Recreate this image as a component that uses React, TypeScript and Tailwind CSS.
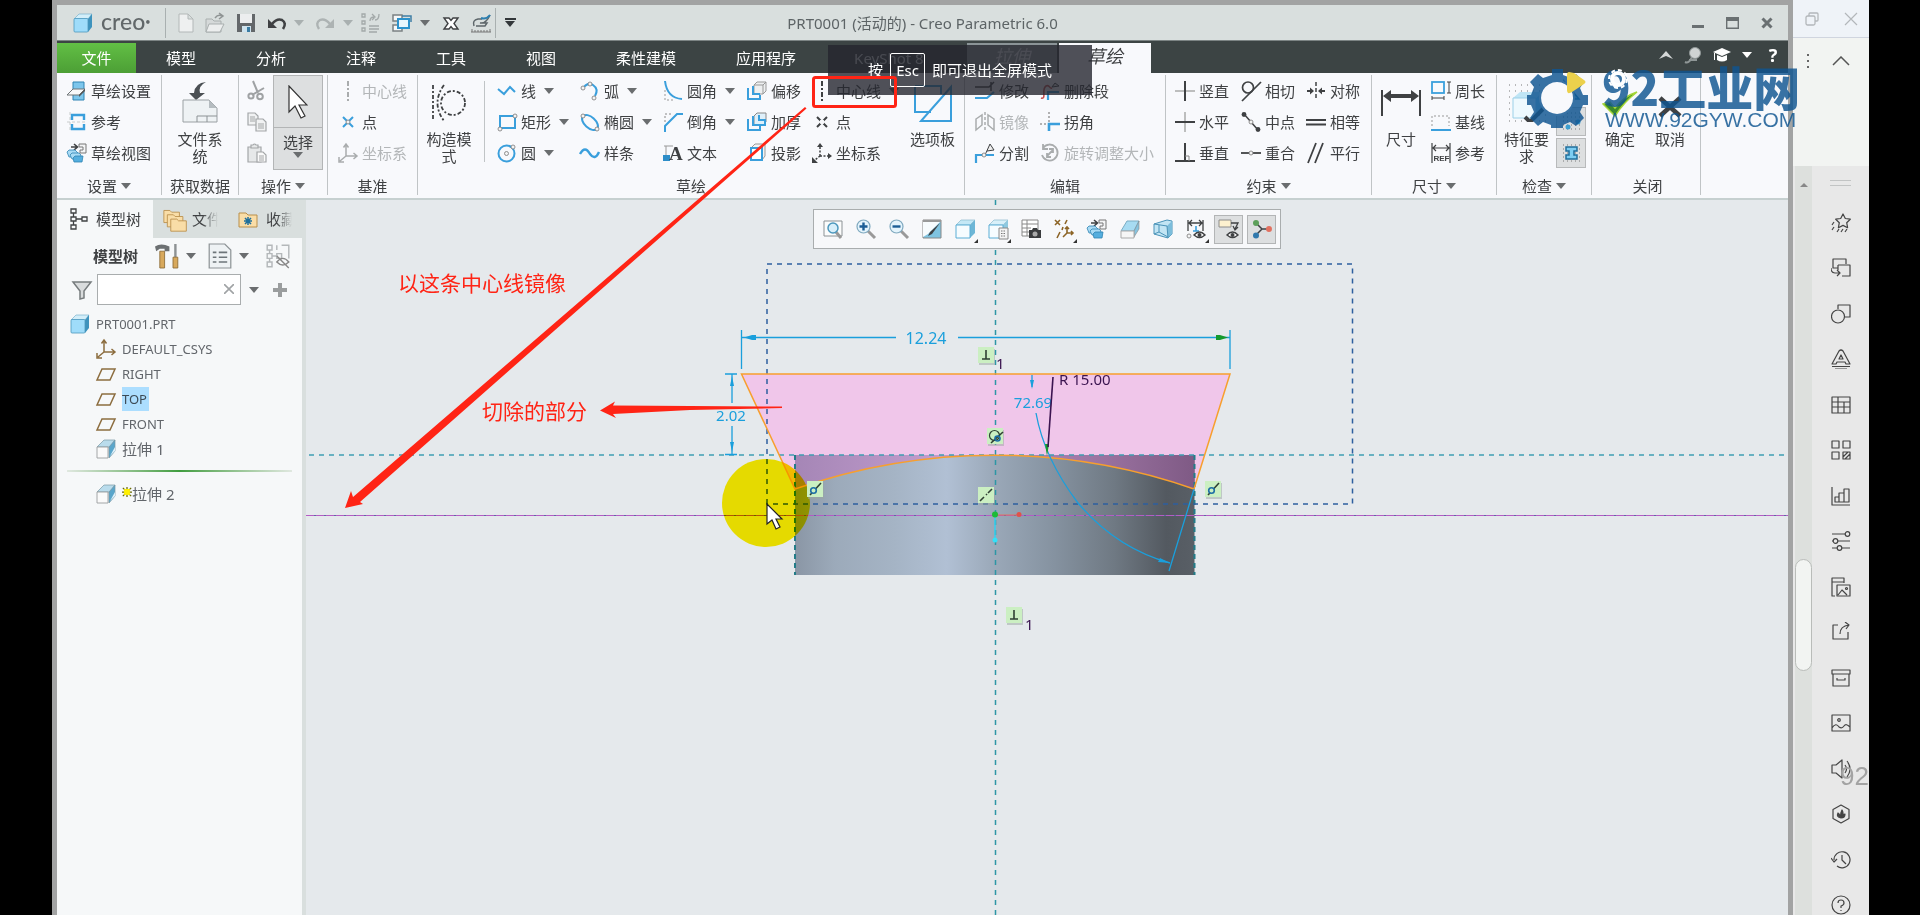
import type { ReactNode } from 'react';

interface Tool {
  icon: string;
  label: string;
  off?: boolean;
  drop?: boolean;
}

const BLUE = '#3a9fdc';
const DARK = '#3f4143';
const GRAY = '#a9acad';

const cube = (
  <>
    <path d="M1 6 6 1h13l-4 5z" fill="#d3eef9" stroke="#6aa9c8" strokeWidth=".6" />
    <path d="M15 6l4-5v13l-4 5z" fill="#3e93bd" />
    <rect x="1" y="5.500" width="14" height="13.500" rx="1" fill="#9fdcfa" stroke="#4b97bd" strokeWidth=".8" />
  </>
);

const plates = (
  <>
    <path d="M4 4h6M7 1l3.500 3L7 7" stroke={DARK} strokeWidth="1.600" fill="none" />
    <path d="M12 1h7v9h-6V7h3V4h-4z" fill="#f4f5f6" stroke="#777" strokeWidth="1" />
    <path d="M0 9l2-2h6l3 3-1 4H2z" fill="#a9dbf5" stroke="#2f84b3" strokeWidth=".8" />
    <path d="M3 12l2-2h7l2 2-1 4H5z" fill="#a9dbf5" stroke="#2f84b3" strokeWidth=".8" />
    <path d="M6 15l2-2h8l-1 6H7z" fill="#55aede" stroke="#2f84b3" strokeWidth=".8" />
  </>
);

const knob = (x: number, y: number) => <circle cx={x} cy={y} r="2" fill="#f3f3f3" stroke="#777" strokeWidth=".8" />;

const axes = (color: string) => (
  <path
    d="M8 13V2M5.500 4.500 8 1l2.500 3.500M8 13h10M15.500 10l3.500 3-3.500 3M8 13l-6 5M1 14v5h5"
    stroke={color}
    strokeWidth="1.500"
    fill="none"
  />
);

const extrude = (
  <>
    <path d="M1 8 8 1h11l-5 7z" fill="#b9dcec" stroke="#7a98a5" strokeWidth=".7" />
    <path d="M13 8l6-7v11l-6 7z" fill="#5aa6cb" stroke="#7a98a5" strokeWidth=".7" />
    <path d="M14 17l5-9v4z" fill="#dff1fa" />
    <path d="M1 8h11v11H1z" fill="#fafafa" stroke="#9a9d9e" strokeWidth=".9" />
  </>
);

const folder = (
  <path d="M1 4h7l2 2h9v12H1z" fill="#f9dda7" stroke="#b98f4a" strokeWidth="1" />
);

const eye = (
  <>
    <path d="M8 16q5.500-6 11 0-5.500 5-11 0z" fill="#fff" stroke={DARK} strokeWidth="1.400" />
    <circle cx="13.500" cy="16" r="2" fill={DARK} />
  </>
);

// all glyphs are drawn on a 20 x 20 grid
const glyphs: Record<string, ReactNode> = {
  cube,
  plates,
  extrude,
  sketchSetup: (
    <>
      <path d="M6 1h11v18H6z" fill="#7cc6ec" stroke="#2f84b3" />
      <path d="M0 14 6 8h12l-6 6z" fill="#f8f9fa" stroke="#6f7476" />
      <path d="M12 14l6-6v2l-6 6z" fill="#55585a" />
    </>
  ),
  reference: (
    <>
      <path d="M0 10h20M3 0v20" stroke="#c9cccc" strokeDasharray="3 2" />
      <path d="M5 8V3h12v5M5 12v5h12v-5" stroke={BLUE} strokeWidth="2.400" fill="none" />
    </>
  ),
  scissors: (
    <g fill="none" stroke="#9fa2a4" strokeWidth="2">
      <path d="M6 0l5 12M17 7 5 14" />
      <circle cx="4" cy="15" r="2.600" />
      <circle cx="13" cy="15.500" r="2.800" />
    </g>
  ),
  copy: (
    <g fill="#f1f2f3" stroke="#a3a6a8" strokeWidth="1.200">
      <path d="M1 1h7l3 3v9H1z" />
      <path d="M9 7h7l3 3v9H9z" />
      <path d="M3 5h5M3 7h5M3 9h5M11 12h6M11 14h6M11 16h6" />
    </g>
  ),
  paste: (
    <g fill="#e6e8e9" stroke="#a3a6a8" strokeWidth="1.200">
      <path d="M1 4h13v15H1z" />
      <path d="M4 2h2q1.500-2 3 0h2v3H4z" />
      <path d="M10 9h6l3 3v7h-9z" fill="#fafafa" />
      <path d="M12 13h5M12 15h5M12 17h5" />
    </g>
  ),
  centerOff: <path d="M10 0v20" stroke={GRAY} strokeWidth="2" strokeDasharray="5 2 2 2" />,
  centerline: <path d="M10 0v20" stroke={DARK} strokeWidth="2" strokeDasharray="5 2 2 2" />,
  pointBlue: (
    <>
      <path d="M5 5l10 10M15 5 5 15" stroke={BLUE} strokeWidth="2" />
      {knob(10, 10)}
    </>
  ),
  point: (
    <>
      <path d="M5 5l10 10M15 5 5 15" stroke={DARK} strokeWidth="2" />
      <circle cx="10" cy="10" r="2.400" fill="#f8f9fc" />
    </>
  ),
  csysOff: axes(GRAY),
  csysBrown: axes('#8c6d3f'),
  csys: (
    <>
      <path d="M8 13V3M8 13h8M8 13l-5 4" stroke={DARK} strokeWidth="1.500" fill="none" strokeDasharray="2 1.500" />
      <path d="M5 4l3-4 3 4zM16 10l4 3-4 3zM0 14v6h6z" fill={DARK} />
    </>
  ),
  line: <path d="M1 8l6 5 6-7 5 5" stroke={BLUE} strokeWidth="2" fill="none" />,
  rect: (
    <>
      <rect x="3" y="4" width="15" height="12" fill="none" stroke={BLUE} strokeWidth="2" />
      {knob(3, 17)}
      {knob(18, 4)}
    </>
  ),
  circle: (
    <>
      <circle cx="9.500" cy="10.500" r="8" fill="none" stroke={BLUE} strokeWidth="2" />
      {knob(9.5, 10.5)}
      {knob(16, 4)}
    </>
  ),
  arc: (
    <>
      <path d="M4 6q4-5 9-2 6 4 2 11" fill="none" stroke={BLUE} strokeWidth="2" />
      {knob(3, 7)}
      {knob(10, 3)}
      {knob(14, 17)}
    </>
  ),
  ellipse: (
    <>
      <ellipse cx="10" cy="10.500" rx="9.500" ry="5.500" transform="rotate(42 10 10.500)" fill="none" stroke={BLUE} strokeWidth="2" />
      {knob(3, 4)}
      {knob(17, 17)}
    </>
  ),
  spline: <path d="M0 11q5-9 10 0 5 7 9-2" fill="none" stroke={BLUE} strokeWidth="2.400" />,
  fillet: (
    <>
      <path d="M2 9v10h9" fill="none" stroke="#999" strokeDasharray="2 2" />
      <path d="M2 0q2 17 17 18" fill="none" stroke={BLUE} strokeWidth="2" />
    </>
  ),
  chamfer: (
    <>
      <path d="M2 10V2h8" fill="none" stroke="#888" strokeDasharray="2 2" />
      <path d="M2 20v-6L14 2h6" fill="none" stroke={BLUE} strokeWidth="2" />
    </>
  ),
  text: (
    <>
      <path d="M1 3h9M3 3v9" stroke="#999" />
      <rect x="0" y="12" width="7" height="6" fill="#2d8dc8" />
      <text x="6" y="17" fontFamily="Liberation Serif" fontWeight="700" fontSize="19" fill={DARK}>A</text>
    </>
  ),
  offset: (
    <>
      <path d="M7 4 10 1h9v9l-3 3H7zM7 4h9v9M16 4l3-3" fill="#eef0f1" stroke="#999" />
      <path d="M1 7v11h12v-4M6 5v8h7" fill="none" stroke={BLUE} strokeWidth="2" />
    </>
  ),
  thicken: (
    <>
      <path d="M7 4 10 1h9v9l-3 3H7z" fill="#dff0fa" stroke="#888" />
      <path d="M1 7v11h12v-4M6 4v9h12V8h-6V3" fill="none" stroke={BLUE} strokeWidth="2" />
    </>
  ),
  project: (
    <>
      <path d="M4 5l4-4h10v12l-3 4" fill="#f2f3f4" stroke="#999" />
      <path d="M4 5h11v12H4z" fill="#fff" stroke={BLUE} strokeWidth="2" />
    </>
  ),
  modify: (
    <>
      <path d="M0 6h14l5-5M16 1v9" stroke={DARK} strokeWidth="1.500" fill="none" />
      <path d="M0 17h12l7-6" stroke={BLUE} strokeWidth="2.200" fill="none" />
    </>
  ),
  deleteSeg: (
    <>
      <path d="M1 17c6 2 0-9 5-12 4-2 3 3 6 2" stroke="#c45252" strokeWidth="1.600" fill="none" />
      <path d="M8 19v-8h11" stroke={BLUE} strokeWidth="2.200" fill="none" />
      <path d="M12 6l3-4 4 3z" fill="#ddd" stroke={DARK} />
    </>
  ),
  mirror: (
    <g fill="none" stroke={GRAY} strokeWidth="1.500">
      <path d="M10 0v20" strokeDasharray="3 2" />
      <path d="M1 7l6-4v10l-6 5zM19 7l-6-4v10l6 5z" />
    </g>
  ),
  corner: (
    <>
      <path d="M0 12h8M9 0v10" stroke="#999" strokeWidth="1.500" strokeDasharray="2 2" />
      <path d="M9 19v-7h11" stroke={BLUE} strokeWidth="2.600" fill="none" />
    </>
  ),
  divide: (
    <>
      <path d="M1 20v-8h18" stroke={BLUE} strokeWidth="2.200" fill="none" />
      <path d="M10 12 15 1l4 6-7 1" fill="#eee" stroke={DARK} />
      {knob(9, 12)}
    </>
  ),
  rotateSize: (
    <g fill="none" stroke={GRAY} strokeWidth="1.800">
      <path d="M3 5a8 8 0 1 1-1 7M3 1v5h5M7 13l6-6M9 6h4v4M7 10v4h4" />
    </g>
  ),
  vertical: (
    <>
      <path d="M0 10h20" stroke="#aaa" strokeWidth="1.500" />
      <path d="M10 0v20" stroke={DARK} strokeWidth="2" />
    </>
  ),
  horizontal: (
    <>
      <path d="M10 0v20" stroke="#aaa" strokeWidth="1.500" />
      <path d="M0 10h20" stroke={DARK} strokeWidth="2" />
    </>
  ),
  perp: (
    <>
      <path d="M10 0v18M0 18h20" stroke={DARK} strokeWidth="2" />
      <path d="M10 13h4v5" stroke="#888" fill="none" />
    </>
  ),
  tangent: (
    <g fill="none" stroke={DARK} strokeWidth="1.700">
      <circle cx="7" cy="6.500" r="5.500" />
      <path d="M1 20 20 1" />
    </g>
  ),
  midpoint: (
    <>
      <path d="M3 2l14 16" stroke={DARK} strokeWidth="1.500" />
      <circle cx="3" cy="2.500" r="2.400" fill={DARK} />
      <circle cx="17" cy="17.500" r="2.400" fill={DARK} />
      {knob(10, 10)}
    </>
  ),
  coincident: (
    <>
      <path d="M0 10h20" stroke={DARK} strokeWidth="1.800" />
      {knob(10, 10)}
    </>
  ),
  symmetric: (
    <>
      <path d="M10 1v18" stroke={DARK} strokeWidth="1.500" strokeDasharray="4 2" />
      <path d="M1 10h6M19 10h-6" stroke={DARK} strokeWidth="2" />
      <path d="M4 6.500 8 10l-4 3.500zM16 6.500 12 10l4 3.500z" fill={DARK} />
    </>
  ),
  equal: <path d="M0 8h20M0 12.500h20" stroke={DARK} strokeWidth="1.800" />,
  parallel: <path d="M2 20 10 0M9 20 17 0" stroke={DARK} strokeWidth="1.800" />,
  perimeter: (
    <>
      <rect x="1" y="1" width="12" height="11" fill="none" stroke={BLUE} strokeWidth="1.800" />
      <path d="M18 1v11M16 1h4M16 12h4M1 17h12M1 15v4M13 15v4" stroke={DARK} />
    </>
  ),
  baseline: (
    <>
      <path d="M1 14V4h17v10" fill="none" stroke="#999" strokeDasharray="2 2" />
      <path d="M0 18h20" stroke={BLUE} strokeWidth="2" />
    </>
  ),
  refDim: (
    <>
      <path d="M1 0v20M19 0v20M2 5h16M5 2 2 5l3 3M15 2l3 3-3 3" stroke={DARK} strokeWidth="1.200" fill="none" />
      <text x="2.500" y="18" fontFamily="Liberation Sans" fontWeight="700" fontSize="8" fill={DARK}>REF</text>
    </>
  ),
  grid: (
    <>
      <path d="M2 2h17M2 6h17M2 10h17M2 14h17M2 18h17" stroke="#777" strokeDasharray="1 3" />
      <path d="M5 4h11v4h-3v4h3v4H5v-4h3V8H5z" fill="#7ccdf2" stroke="#1f6f9c" strokeWidth="1.500" />
    </>
  ),
  endpoints: (
    <>
      <path d="M2 2h17M2 6h17M2 10h17M2 14h17M2 18h17" stroke="#777" strokeDasharray="1 3" />
      <circle cx="7" cy="16" r="2.500" fill="#3d9fd0" />
      <circle cx="17" cy="11" r="2.500" fill="#3d9fd0" />
    </>
  ),
  region: <path d="M3 1v18h15zM7 9v6h6z" fill="#8ed0ef" stroke="#2a7fb0" strokeWidth="1.500" />,
  newDoc: <path d="M3 1h9l5 5v13H3zM12 1v5h5" fill="#eef0f0" stroke="#b3b8b8" />,
  open: (
    <>
      <path d="M1 6h6l2 2h7v11H1z" fill="#d5d9d9" stroke="#a9afaf" />
      <path d="M4 11h15l-4 8H1z" fill="#eceeee" stroke="#a9afaf" />
      <path d="M10 5q3-4 7-2M14 0l4 3-4 3" fill="none" stroke="#8f9494" strokeWidth="1.500" />
    </>
  ),
  save: (
    <>
      <path d="M1 1h18v18H1z" fill="#63676a" />
      <path d="M4 1h12v9H4z" fill="#eceeef" />
      <path d="M6 13h9v6H6z" fill="#cfe3ee" />
      <path d="M11 14h3v5h-3z" fill="#3a7ca3" />
    </>
  ),
  undo: (
    <>
      <path d="M5 11q5-6 10-4 5 3 1 9" fill="none" stroke={DARK} strokeWidth="2.600" />
      <path d="M1 6v9h9z" fill={DARK} />
    </>
  ),
  redo: (
    <>
      <path d="M15 11q-5-6-10-4-5 3-1 9" fill="none" stroke="#adb3b3" strokeWidth="2.400" />
      <path d="M19 6v9h-9z" fill="#adb3b3" />
    </>
  ),
  regen: (
    <g fill="none" stroke="#a3a9a9" strokeWidth="1.300">
      <path d="M1 1h3v3H1zM1 8h3v3H1zM1 15h3v3H1zM8 13h10M8 16h10M8 19h8M9 8q0-4 4-4M11 1l3 3-3 3M18 1q0 6-4 6" />
    </g>
  ),
  windows: (
    <g fill="#f5f7f8" strokeWidth="1.500">
      <path d="M1 2h9v6H1z" stroke="#7b8183" />
      <path d="M1 12h9v6H1z" stroke="#7b8183" />
      <path d="M6 6h11v9H6z" fill="#e8f6fd" stroke="#2c92cc" strokeWidth="2" />
      <path d="M10 3h9v6" fill="none" stroke="#3f7fa5" />
    </g>
  ),
  closeBox: (
    <path d="M3 5h5l2 2.500L12 5h5l-4 5.500 4 5.500h-5l-2-2.500L8 16H3l4-5.500z" fill="#fff" stroke={DARK} strokeWidth="1.400" />
  ),
  sketchPad: (
    <>
      <path d="M1 19v-3M4 17v2M7 17v2M10 17v2M13 17v2M16 17v2M19 16v3M0 19h20" stroke="#777" fill="none" />
      <path d="M3 13q-2-6 4-7h4M5 13h9l2-3H9q6 1 10-8" fill="none" stroke="#5d666a" strokeWidth="1.500" />
      <path d="M10 5q5 2 9-3" fill="none" stroke="#2c7fb0" strokeWidth="2" />
    </>
  ),
  treeTab: (
    <path d="M3 0h5v4H3zM3 8h5v4H3zM3 16h5v4H3zM14 8h5v4h-5zM5.500 4v4M5.500 12v4M8 10h6" fill="none" stroke={DARK} strokeWidth="1.300" />
  ),
  folders: (
    <g transform="scale(.72)">
      {folder}
      <g transform="translate(4 5)">{folder}</g>
      <g transform="translate(8 10)">{folder}</g>
    </g>
  ),
  favorite: (
    <>
      {folder}
      <path d="M10 8v8M6 12h8M7 9l6 6M13 9l-6 6" stroke="#1f6f9c" strokeWidth="1.500" />
    </>
  ),
  hammer: (
    <>
      <path d="M0 2q5-3 12 0v4H8V4H4L1 6z" fill="#6c7072" />
      <path d="M4 6h4v14H4z" fill="#d8a95c" stroke="#8a6a34" strokeWidth=".7" />
      <path d="M16 0h2v11h-2z" fill="#8d9193" />
      <path d="M15 11h4v9h-4z" fill="#d8a95c" stroke="#8a6a34" strokeWidth=".7" />
    </>
  ),
  listDoc: (
    <>
      <path d="M1 0h13l5 5v15H1z" fill="#eef2f4" stroke="#8c9295" />
      <path d="M9 7h7M9 11h7M9 15h7M4 7h3M4 11h3M4 15h3" stroke="#6d7579" strokeWidth="1.300" />
    </>
  ),
  treeHide: (
    <g fill="none" stroke="#b4b8ba" strokeWidth="1.200">
      <path d="M1 1h4v4H1zM1 8h4v4H1zM1 15h4v4H1zM9 8h4v4H9zM3 5v3M3 12v3M5 10h4M9 1v4M13 1h6v11" />
      <path d="M9 15q5-6 10 0-5 5-10 0zM9 10l10 10" stroke="#888" />
    </g>
  ),
  funnel: <path d="M1 2h18l-7 9v7l-4 1v-8z" fill="#d9dcdd" stroke="#777c7e" strokeWidth="1.500" />,
  plane: <path d="M6 5h13l-5 11H1z" fill="none" stroke="#8c6d3f" strokeWidth="1.500" />,
  refit: (
    <>
      <path d="M1 2h18v15H1z" fill="#fbfcfc" stroke="#8c9295" />
      <path d="M13 13l5 6" stroke="#999" strokeWidth="3" />
      <circle cx="10" cy="9" r="5" fill="#d8effa" stroke="#4b97bd" strokeWidth="1.500" />
    </>
  ),
  zoomIn: (
    <>
      <path d="M12 12l7 7" stroke="#999" strokeWidth="3" />
      <circle cx="7.500" cy="7.500" r="6.500" fill="#e4f4fc" stroke="#7fa9bf" strokeWidth="1.200" />
      <path d="M3.500 7.500h8M7.500 3.500v8" stroke="#1c5e96" strokeWidth="2.400" />
    </>
  ),
  zoomOut: (
    <>
      <path d="M12 12l7 7" stroke="#999" strokeWidth="3" />
      <circle cx="7.500" cy="7.500" r="6.500" fill="#e4f4fc" stroke="#7fa9bf" strokeWidth="1.200" />
      <path d="M3.500 7.500h8" stroke="#1c5e96" strokeWidth="2.400" />
    </>
  ),
  repaint: (
    <>
      <path d="M1 1h18v18H1z" fill="#7fc3e0" stroke="#888" />
      <path d="M1 3h17L6 15l-5 3z" fill="#f7fbfd" />
      <path d="M1 1h18v2H1z" fill="#999" />
      <path d="M6 17l2-4L18 4l-8 11z" fill={DARK} />
    </>
  ),
  display: (
    <>
      <path d="M1 6 6 1h14l-5 5z" fill="#c4e8f6" stroke="#8bb9cc" strokeWidth=".7" />
      <path d="M15 6l5-5v13l-5 5z" fill="#6db6d6" />
      <path d="M1 6h14v13H1z" fill="#f6fcff" stroke="#5aaed6" strokeWidth="1" />
    </>
  ),
  saved: (
    <>
      <path d="M1 6 6 1h14l-5 5z" fill="#d8f0f9" stroke="#8bb9cc" strokeWidth=".7" />
      <path d="M15 6l5-5v11l-5 3z" fill="#8fc9e0" />
      <path d="M1 6h14v13H1z" fill="#f6fcff" stroke="#5aaed6" strokeWidth="1" />
      <path d="M11 9h9v11h-9z" fill="#f4f4f4" stroke="#888" />
      <path d="M13 12h5M13 14.500h5M13 17h5" stroke="#777" strokeDasharray="1.500 1" />
    </>
  ),
  snapshot: (
    <>
      <path d="M1 1h16v16H1zM1 5h16M1 9h9M1 13h8M6 1v16" fill="#fff" stroke="#888" />
      <path d="M8 11h3l1-2h4l1 2h3v8H8z" fill="#3a3c3e" />
      <circle cx="14" cy="15" r="2.500" fill="#aaa" />
    </>
  ),
  datum: (
    <g stroke="#8c6426" strokeWidth="1.600" fill="none">
      <path d="M1 1l5 5M6 1 1 6M13 1l-2 4M9 8l-1 3M6 13l-3 6" />
      <path d="M13 8v6h6M13 14l-4 4M11 10l2-2 2 2M17 12l2 2-2 2" />
    </g>
  ),
  section: (
    <>
      <path d="M1 12 7 2h12l-5 10z" fill="#a7dbf2" stroke="#7badc4" />
      <path d="M14 12l5-10v8l-5 8z" fill="#86c4e0" stroke="#888" strokeWidth=".6" />
      <path d="M1 12h13v7H1z" fill="#f6f6f6" stroke="#aaa" />
    </>
  ),
  perspective: (
    <>
      <path d="M1 5 14 1l5 1v13l-4 4L1 15z" fill="#c2e5f4" stroke="#4a93b8" strokeWidth="1" />
      <path d="M14 7l5-5v13l-4 4z" fill="#7cbddb" />
      <path d="M1 5l13 2 1 12M6 6v7l9 5M6 13l-5 2" fill="none" stroke="#4a93b8" />
    </>
  ),
  dimView: (
    <>
      <path d="M2 1v11M17 1v11M3 4h13M6 1 3 4l3 3M13 1l3 3-3 3" stroke={DARK} strokeWidth="1.300" fill="none" />
      <path d="M10 7v5M7 12h6" stroke={BLUE} strokeWidth="1.600" />
      {knob(3, 17)}
      {eye}
    </>
  ),
  tagView: (
    <>
      <path d="M0 1h12v7H0z" fill="#fdf1cf" stroke="#8c8c8c" />
      <path d="M12 4h7l-3 6M14 7l2 4 3-3" fill="none" stroke={DARK} strokeWidth="1.300" />
      {eye}
    </>
  ),
  spin: (
    <>
      <path d="M4 4l6 6h7M10 10l-6 6" stroke={DARK} strokeWidth="1.500" fill="none" />
      <circle cx="4" cy="4" r="3" fill="#5da05a" />
      <circle cx="17" cy="10" r="3" fill="#e2705f" />
      <circle cx="4" cy="16.500" r="3" fill="#3179ad" />
    </>
  ),
};

// icons of the outer application rail, outline only
const rail: [string, ReactNode][] = [
  ['特效', <path d="M12 1l2.300 4.500 5 .7-3.600 3.500.9 5L12 12.400 7.400 14.700l.9-5L4.700 6.200l5-.7zM3 9l-2 3M3 14l-2 3M8 16l-2 3M12 16l-2 3M16 16l-2 3" />],
  ['替换', <path d="M7 10H2V1h13v5M7 7h12v11h-8M7 7v5M0 10q0 5 4 5h4M6 12l3 3-3 3" />],
  ['形状', <><circle cx="7" cy="12.500" r="6.500" /><path d="M7 5V1h12v12h-5" /></>],
  ['艺术字', <path d="M1 15 8 2q2-2 4 0l7 13h-4l-1-2H6l-1 2zM8 10l2-4 2 4zM1 17.500h18M4 20h12" />],
  ['表格', <path d="M1 2h18v16H1zM1 7h18M1 12h18M7 2v10M13 7v11M7 12v6" />],
  ['图标库', <path d="M1 1h7v7H1zM12 1h7v7h-7zM1 12h7v7H1zM12 12h7v7h-7zM12 17l5-5M14 19l5-5" />],
  ['图表', <path d="M1 1v18h18M4 16v-5h4v5zM8 16V7h5v9M13 16V3h5v13H8" />],
  ['设置', <><path d="M1 3h13M1 10h1M7 10h12M1 17h5M11 17h8" /><circle cx="16.500" cy="3" r="2.300" /><circle cx="4.500" cy="10" r="2.300" /><circle cx="8.500" cy="17" r="2.300" /></>],
  ['图片库', <><path d="M4 19H1V1h12v5M1 5h12M6 8h13v11H6zM7 18l4-5 5 5" /><circle cx="15.500" cy="11.500" r="1" /></>],
  ['分享', <path d="M7 3H2v14h15v-7M9 12q0-8 9-9M14 0l4 3-3 4" />],
  ['素材', <path d="M1 2h18v4H1zM2 6v12h16V6M6 10v2h8v-2" />],
  ['图片', <><path d="M1 2h18v16H1zM1 15q4-6 7-1 3 2 5-1 2-3 6 1" /><circle cx="8" cy="7" r="1.300" /></>],
  ['音频', <path d="M1 6h4l6-5v18l-6-5H1zM14 6q3 4 0 8M16 2q6 8 0 16" />],
  ['素材社区', <><path d="M10 1l8 4.500v9L10 19l-8-4.500v-9z" /><path d="M10 14q-5-1-3-5 2 1 3 4-1-4 1-7 2 3 0 7 1-3 3-3 0 4-4 4z" fill="#444" /></>],
  ['历史', <path d="M3 10a8 8 0 1 1 3 6M0 8l3 4 3-3M11 5v5l4 4" />],
  ['帮助', <><circle cx="10" cy="10" r="9" /><path d="M7 8q0-3 3-3t3 3q0 2-3 3v2M10 15v1" /></>],
];

const settings: Tool[] = [
  { icon: 'sketchSetup', label: '草绘设置' },
  { icon: 'reference', label: '参考' },
  { icon: 'plates', label: '草绘视图' },
];
const datums: Tool[] = [
  { icon: 'centerOff', label: '中心线', off: true },
  { icon: 'pointBlue', label: '点' },
  { icon: 'csysOff', label: '坐标系', off: true },
];
const shapes: Tool[] = [
  { icon: 'line', label: '线', drop: true },
  { icon: 'rect', label: '矩形', drop: true },
  { icon: 'circle', label: '圆', drop: true },
];
const curves: Tool[] = [
  { icon: 'arc', label: '弧', drop: true },
  { icon: 'ellipse', label: '椭圆', drop: true },
  { icon: 'spline', label: '样条' },
];
const corners: Tool[] = [
  { icon: 'fillet', label: '圆角', drop: true },
  { icon: 'chamfer', label: '倒角', drop: true },
  { icon: 'text', label: '文本' },
];
const offsets: Tool[] = [
  { icon: 'offset', label: '偏移' },
  { icon: 'thicken', label: '加厚' },
  { icon: 'project', label: '投影' },
];
const centers: Tool[] = [
  { icon: 'centerline', label: '中心线', drop: true },
  { icon: 'point', label: '点' },
  { icon: 'csys', label: '坐标系' },
];
const edits: Tool[] = [
  { icon: 'modify', label: '修改' },
  { icon: 'mirror', label: '镜像', off: true },
  { icon: 'divide', label: '分割' },
];
const edits2: Tool[] = [
  { icon: 'deleteSeg', label: '删除段' },
  { icon: 'corner', label: '拐角' },
  { icon: 'rotateSize', label: '旋转调整大小', off: true },
];
const constraints: Tool[][] = [
  [
    { icon: 'vertical', label: '竖直' },
    { icon: 'horizontal', label: '水平' },
    { icon: 'perp', label: '垂直' },
  ],
  [
    { icon: 'tangent', label: '相切' },
    { icon: 'midpoint', label: '中点' },
    { icon: 'coincident', label: '重合' },
  ],
  [
    { icon: 'symmetric', label: '对称' },
    { icon: 'equal', label: '相等' },
    { icon: 'parallel', label: '平行' },
  ],
];
const dimensions: Tool[] = [
  { icon: 'perimeter', label: '周长' },
  { icon: 'baseline', label: '基线' },
  { icon: 'refDim', label: '参考' },
];

const viewTools: { icon: string; label: string; more?: boolean; on?: boolean }[] = [
  { icon: 'refit', label: '重新调整' },
  { icon: 'zoomIn', label: '放大' },
  { icon: 'zoomOut', label: '缩小' },
  { icon: 'repaint', label: '重画' },
  { icon: 'display', label: '显示样式', more: true },
  { icon: 'saved', label: '已保存方向', more: true },
  { icon: 'snapshot', label: '视图管理器' },
  { icon: 'datum', label: '基准显示', more: true },
  { icon: 'plates', label: '草绘视图' },
  { icon: 'section', label: '修剪模型' },
  { icon: 'perspective', label: '透视图' },
  { icon: 'dimView', label: '草绘器显示', more: true },
  { icon: 'tagView', label: '注释显示', on: true },
  { icon: 'spin', label: '旋转中心', on: true },
];

function Glyph({ name, className = 'size-5' }: { name: string; className?: string }) {
  return (
    <svg viewBox="0 0 20 20" className={`${className} shrink-0 overflow-visible`} fill="none" aria-hidden="true">
      {glyphs[name]}
    </svg>
  );
}

function Caret({ className = 'text-[#6a6d6f]' }: { className?: string }) {
  return (
    <svg viewBox="0 0 10 6" className={`w-[10px] h-[6px] shrink-0 ${className}`} aria-hidden="true">
      <path d="M0 0h10L5 6z" fill="currentColor" />
    </svg>
  );
}

function Column({ tools, className = '' }: { tools: Tool[]; className?: string }) {
  return (
    <div className={`flex flex-col shrink-0 ${className}`}>
      {tools.map((t) => (
        <button
          key={t.label}
          type="button"
          disabled={t.off}
          className={`flex items-center gap-1 h-[31px] whitespace-nowrap ${t.off ? 'text-[#b3b6b8]' : ''}`}
        >
          <Glyph name={t.icon} />
          <span>{t.label}</span>
          {t.drop && <span className="pl-1"><Caret /></span>}
        </button>
      ))}
    </div>
  );
}

function Big({ label, className, children }: { label: string; className: string; children: ReactNode }) {
  return (
    <button type="button" className={`flex flex-col items-center shrink-0 leading-[17px] ${className}`}>
      <span className="h-14 flex items-center justify-center">{children}</span>
      <span className="w-12">{label}</span>
    </button>
  );
}

function Group({ title, drop, className, children }: { title: string; drop?: boolean; className: string; children: ReactNode }) {
  return (
    <section className={`flex flex-col shrink-0 border-r border-[#c0c4c6] ${className}`}>
      <div className="flex h-[93px]">{children}</div>
      <h3 className="h-[27px] flex items-end justify-center gap-1 leading-[18px]">
        {title}
        {drop && <span className="h-[18px] flex items-center"><Caret /></span>}
      </h3>
    </section>
  );
}

function TitleBar() {
  return (
    <header className="h-9 grid grid-cols-[1fr_auto_1fr] items-center bg-[#d9dfde] border-b border-[#7c8484]">
      <div className="flex items-center">
        <div className="w-[109px] pl-4 h-[30px] flex items-center gap-2 border-r border-[#a9b0b0]">
          <Glyph name="cube" />
          <span className="font-['Lato',sans-serif] font-medium text-[23px] leading-[26px] pb-1 text-[#62686a]">creo<sup className="text-[9px]">•</sup></span>
        </div>
        <div className="flex items-center pl-[5px]">
          <button type="button" aria-label="新建" className="w-[29px] flex justify-center"><Glyph name="newDoc" /></button>
          <button type="button" aria-label="打开" className="w-[29px] flex justify-center"><Glyph name="open" /></button>
          <button type="button" aria-label="保存" className="w-[34px] flex justify-center"><Glyph name="save" /></button>
          <button type="button" aria-label="撤消" className="w-7 flex justify-center"><Glyph name="undo" /></button>
          <button type="button" aria-label="撤消列表" className="w-4 flex justify-center"><Caret className="text-[#a9b0b0]" /></button>
          <button type="button" aria-label="重做" className="w-9 flex justify-center"><Glyph name="redo" /></button>
          <button type="button" aria-label="重做列表" className="w-[10px] flex justify-center"><Caret className="text-[#a9b0b0]" /></button>
          <button type="button" aria-label="重新生成" className="w-9 flex justify-center"><Glyph name="regen" /></button>
          <button type="button" aria-label="窗口" className="w-[26px] flex justify-center"><Glyph name="windows" /></button>
          <button type="button" aria-label="窗口列表" className="w-5 flex justify-center"><Caret /></button>
          <button type="button" aria-label="关闭窗口" className="w-8 flex justify-center"><Glyph name="closeBox" /></button>
          <button type="button" aria-label="草绘" className="w-7 flex justify-center"><Glyph name="sketchPad" /></button>
          <span className="w-px h-[30px] bg-[#a9b0b0]" />
          <button type="button" aria-label="自定义" className="w-7 flex flex-col items-center gap-[1px]">
            <span className="w-[11px] h-[2px] bg-[#33373a]" />
            <Caret className="text-[#33373a]" />
          </button>
        </div>
      </div>
      <h1 className="text-[#5d6466]">PRT0001 (活动的) - Creo Parametric 6.0</h1>
      <div className="flex items-center justify-end gap-[22px] pr-[15px] text-[#6a7072]">
        <button type="button" aria-label="最小化"><svg viewBox="0 0 12 12" className="size-3"><path d="M0 9.500h12" stroke="currentColor" strokeWidth="3" /></svg></button>
        <button type="button" aria-label="最大化"><svg viewBox="0 0 13 12" className="w-[13px] h-3"><path d="M.7 1v10.300h11.600V1z" fill="none" stroke="currentColor" strokeWidth="1.400" /><path d="M0 0h13v4H0z" fill="currentColor" /></svg></button>
        <button type="button" aria-label="关闭"><svg viewBox="0 0 12 12" className="size-3"><path d="M1.500 1.500l9 9M10.500 1.500l-9 9" stroke="currentColor" strokeWidth="3" /></svg></button>
      </div>
    </header>
  );
}

function TabBar() {
  return (
    <nav className="h-8 flex items-end bg-[#3c4444] text-white">
      <button type="button" className="w-[79px] h-[30px] bg-linear-to-b from-[#62bf45] to-[#4c9f35]">文件</button>
      {['模型', '分析', '注释', '工具', '视图', '柔性建模', '应用程序'].map((t) => (
        <button key={t} type="button" className="h-[30px] px-[30px] whitespace-nowrap">{t}</button>
      ))}
      <button type="button" className="w-[141px] pl-7 h-[30px] text-left text-[#d5d8d8]">KeyShot 8</button>
      <button type="button" className="w-[90px] h-[30px] mr-[2px] bg-[#8b9497] italic pb-1 text-[18px] text-[#dfe2e4]">拉伸</button>
      <button type="button" className="w-[92px] h-[30px] bg-[#f8f9fc] italic pb-1 text-[18px] text-[#3f4143]">草绘</button>
      <div className="flex-1 flex items-center justify-end gap-[11px] h-8 pb-1 pr-[5px]">
        <button type="button" aria-label="最小化功能区"><svg viewBox="0 0 14 8" className="w-[14px] h-2"><path d="M0 8 7 0l7 8-7-3z" fill="#d5d8d8" /></svg></button>
        <button type="button" aria-label="搜索"><svg viewBox="0 0 18 18" className="size-[18px]"><path d="M1 16q4 2 7-5M5 14h8" stroke="#8f9696" strokeWidth="2" fill="none" /><circle cx="11" cy="7" r="5.500" fill="#cfd3d3" stroke="#8f9696" /></svg></button>
        <button type="button" aria-label="学习"><svg viewBox="0 0 18 14" className="w-[18px] h-[14px]"><path d="M9 0l9 4-9 4-9-4zM4 7v5q5 3 10 0V7L9 9zM1 5h1v7H1z" fill="#fff" /></svg></button>
        <button type="button" aria-label="更多"><Caret className="text-white" /></button>
        <button type="button" className="w-5 text-center font-bold text-[18px] leading-5">?</button>
      </div>
    </nav>
  );
}

function Ribbon() {
  return (
    <div className="flex h-[127px] pt-[2px] pb-[3px] bg-[#f8f9fc] border-b-2 border-[#c6d0d0]">
      <Group title="设置" drop className="w-[105px]">
        <Column tools={settings} className="pl-[10px]" />
      </Group>
      <Group title="获取数据" className="w-[77px]">
        <Big label="文件系统" className="w-full">
          <svg viewBox="0 0 36 42" className="w-9 h-[42px]">
            <path d="M24 0q-8 4-6 11h5l-9 7-7-7h5Q13 1 24 0z" fill="#4b5054" />
            <path d="M1 18h26l8 8v14H1z" fill="#eef2f4" stroke="#9aa0a3" />
            <path d="M27 18v8h8z" fill="#b5bcc0" />
            <path d="M15 40v-6h20M25 34v6" fill="none" stroke="#8c9295" />
          </svg>
        </Big>
      </Group>
      <Group title="操作" drop className="w-[89px]">
        <div className="flex flex-col w-[34px] pl-2">
          {[['scissors', '剪切'], ['copy', '复制'], ['paste', '粘贴']].map(([icon, label]) => (
            <button key={icon} type="button" aria-label={label} className="h-[31px] flex items-center">
              <Glyph name={icon} />
            </button>
          ))}
        </div>
        <button type="button" className="w-[50px] h-[95px] flex flex-col items-center bg-[#dddfe0] border border-[#b3b5b6]">
          <span className="h-[52px] w-full flex items-center justify-center border-b border-[#b3b5b6]">
            <svg viewBox="0 0 20 34" className="w-5 h-[34px]">
              <path d="M1 1v26l6-6 6 12 4-2-6-11h8z" fill="#fff" stroke="#333" strokeWidth="1.200" />
            </svg>
          </span>
          <span className="pt-1 leading-5">选择</span>
          <Caret />
        </button>
      </Group>
      <Group title="基准" className="w-[90px]">
        <Column tools={datums} className="pl-[10px]" />
      </Group>
      <Group title="草绘" className="w-[547px]">
        <Big label="构造模式" className="w-[62px]">
          <svg viewBox="0 0 36 38" className="w-9 h-[38px]" fill="none" stroke={DARK} strokeWidth="1.800" strokeDasharray="4 2 2 2">
            <path d="M2 1v36M13 1q-13 18 0 36" />
            <circle cx="22" cy="19" r="12" />
          </svg>
        </Big>
        <div className="ml-1 my-[6px] w-px bg-[#c0c4c6]" />
        <Column tools={shapes} className="ml-3 w-[83px]" />
        <Column tools={curves} className="w-[83px]" />
        <Column tools={corners} className="w-[84px]" />
        <Column tools={offsets} className="w-[65px]" />
        <Column tools={centers} className="w-[89px]" />
        <Big label="选项板" className="w-[63px]">
          <svg viewBox="0 0 40 38" className="w-10 h-[38px]" fill="none" stroke={BLUE} strokeWidth="2">
            <path d="M2 2h26v8M18 28H2V2M38 3v34H8z" />
          </svg>
        </Big>
      </Group>
      <Group title="编辑" className="w-[201px]">
        <Column tools={edits} className="ml-[10px] w-[65px]" />
        <Column tools={edits2} />
      </Group>
      <Group title="约束" drop className="w-[206px]">
        <Column tools={constraints[0]} className="ml-[9px] w-[66px]" />
        <Column tools={constraints[1]} className="w-[65px]" />
        <Column tools={constraints[2]} />
      </Group>
      <Group title="尺寸" drop className="w-[125px]">
        <Big label="尺寸" className="w-[58px]">
          <svg viewBox="0 0 40 26" className="w-10 h-[26px]">
            <path d="M1 0v26M39 0v26M6 6h28" stroke={DARK} strokeWidth="2" />
            <path d="M2 6l8-6v4h20V0l8 6-8 6V8H10v4z" fill={DARK} />
          </svg>
        </Big>
        <Column tools={dimensions} className="pl-[1px]" />
      </Group>
      <Group title="检查" drop className="w-[95px]">
        <Big label="特征要求" className="w-[59px]">
          <svg viewBox="0 0 38 38" className="size-[38px]">
            <path d="M1 1h37M1 7h37M1 13h37M1 19h37M1 25h37M1 31h37M1 37h37" stroke="#777" strokeDasharray="1 5" />
            <path d="M5 14l7-6h22l-6 6z" fill="#bfe5f5" />
            <path d="M28 14l6-6v20l-6 6z" fill="#8fcbe6" />
            <path d="M5 14h23v20H5z" fill="#eef9fe" stroke="#9bd0e8" />
            <path d="M17 33l5 5 14-14" stroke={DARK} strokeWidth="4" fill="none" />
          </svg>
        </Big>
        <div className="flex flex-col gap-[2px]">
          <button type="button" aria-label="着色封闭环" className="w-[30px] h-[30px] flex items-center justify-center"><Glyph name="region" /></button>
          <button type="button" aria-label="突出显示开放端" className="w-[30px] h-[30px] flex items-center justify-center bg-[#dddfe0] border border-[#b8babb]"><Glyph name="endpoints" /></button>
          <button type="button" aria-label="重叠几何" className="w-[30px] h-[30px] flex items-center justify-center bg-[#dddfe0] border border-[#b8babb]"><Glyph name="grid" /></button>
        </div>
      </Group>
      <Group title="关闭" className="w-[109px] pl-[3px]">
        <Big label="确定" className="w-[50px]">
          <svg viewBox="0 0 36 26" className="w-9 h-[26px] mt-[2px]">
            <path d="M1 13l7-2 5 6Q22 5 35 1 22 11 13 25z" fill="#3c8a2c" stroke="#a5d639" strokeWidth="1.500" />
          </svg>
        </Big>
        <Big label="取消" className="w-[50px]">
          <svg viewBox="0 0 24 22" className="w-6 h-[22px] mt-2">
            <path d="M2 2l20 18M22 2 2 20" stroke={DARK} strokeWidth="4.500" />
          </svg>
        </Big>
      </Group>
    </div>
  );
}

function TreeRow({ icon, className = 'pl-[39px]', children }: { icon: string; className?: string; children: ReactNode }) {
  return (
    <li className={`h-[25px] flex items-center gap-[6px] ${className}`}>
      <Glyph name={icon} className="size-5" />
      {children}
    </li>
  );
}

function ModelTree() {
  return (
    <aside className="w-[249px] shrink-0 flex flex-col bg-[#f6f8f9] border-r-4 border-[#d9dfde]">
      <div className="h-[38px] flex -mr-1 bg-[#d9dfde]">
        <button type="button" className="w-24 shrink-0 pl-[11px] flex items-center gap-2 bg-[#f6f8f9]">
          <Glyph name="treeTab" />
          模型树
        </button>
        <button type="button" className="w-[75px] shrink-0 pl-[10px] flex items-center gap-[5px]">
          <Glyph name="folders" className="size-6" />
          <span className="w-[26px] overflow-hidden whitespace-nowrap bg-linear-to-r from-[#3f4143] from-40% to-[#d9dfde] bg-clip-text text-transparent">文件</span>
        </button>
        <button type="button" className="pl-[10px] flex items-center gap-2">
          <Glyph name="favorite" />
          <span className="w-[26px] overflow-hidden whitespace-nowrap bg-linear-to-r from-[#3f4143] from-40% to-[#d9dfde] bg-clip-text text-transparent">收藏</span>
        </button>
      </div>
      <div className="h-9 flex items-center pl-9">
        <h2 className="font-bold w-[62px]">模型树</h2>
        <button type="button" aria-label="工具" className="w-[31px]"><Glyph name="hammer" className="w-6 h-[26px]" /></button>
        <Caret />
        <button type="button" aria-label="显示" className="ml-3 w-[31px]"><Glyph name="listDoc" className="w-6 h-[26px]" /></button>
        <Caret />
        <button type="button" aria-label="隐藏" className="ml-4"><Glyph name="treeHide" className="w-[26px] h-6" /></button>
      </div>
      <div className="h-[31px] mb-[6px] flex items-center pl-[15px]">
        <Glyph name="funnel" />
        <div className="relative ml-[5px]">
          <input aria-label="过滤" className="w-36 h-[31px] pl-2 pr-6 bg-white border border-[#a9adae]" />
          <button type="button" aria-label="清除" className="absolute right-[7px] top-[10px]">
            <svg viewBox="0 0 10 10" className="size-[10px]"><path d="M0 0l10 10M10 0 0 10" stroke="#a0a3a5" strokeWidth="1.600" /></svg>
          </button>
        </div>
        <span className="ml-2"><Caret /></span>
        <button type="button" aria-label="添加" className="ml-[14px]">
          <svg viewBox="0 0 14 14" className="size-[14px]"><path d="M7 0v14M0 7h14" stroke="#9a9d9e" strokeWidth="4" /></svg>
        </button>
      </div>
      <ul className="text-[#62666b]">
        <TreeRow icon="cube" className="pl-[13px]"><span className="text-[13px]">PRT0001.PRT</span></TreeRow>
        <TreeRow icon="csysBrown"><span className="text-[13px]">DEFAULT_CSYS</span></TreeRow>
        <TreeRow icon="plane"><span className="text-[13px]">RIGHT</span></TreeRow>
        <TreeRow icon="plane"><span className="h-6 leading-6 pr-[2px] bg-[#acdeff] text-[13px] text-[#3c4a55]">TOP</span></TreeRow>
        <TreeRow icon="plane"><span className="text-[13px]">FRONT</span></TreeRow>
        <TreeRow icon="extrude">拉伸 1</TreeRow>
        <li className="h-5 flex items-center px-[10px]" aria-hidden="true">
          <span className="h-[2px] w-full bg-linear-to-r from-[#e0e8e0] via-[#3f9d3f] to-[#e0e8e0]" />
        </li>
        <TreeRow icon="extrude">
          <span className="flex items-center">
            <svg viewBox="0 0 12 12" className="size-[10px] mb-1"><path d="M6 0v12M0 6h12M1 1l10 10M11 1 1 11" stroke="#6b6b00" strokeWidth="1.500" /><rect x="2.500" y="2.500" width="7" height="7" fill="#fff000" /></svg>
            拉伸 2
          </span>
        </TreeRow>
      </ul>
    </aside>
  );
}

function Badge({ x, y, children }: { x: number; y: number; children: ReactNode }) {
  return (
    <g transform={`translate(${x} ${y})`}>
      <rect x="1" y="2" width="16" height="16" fill="#9aa59f" opacity=".5" />
      <rect width="16" height="16" fill="#cbefc2" />
      <g fill="none" stroke="#2f4034" strokeWidth="1.600">{children}</g>
    </g>
  );
}

function Sketch() {
  return (
    <svg
      viewBox="306 200 1482 715"
      preserveAspectRatio="xMinYMin slice"
      className="absolute inset-0 w-full h-full font-['Noto_Sans',sans-serif]"
      fill="none"
    >
      <defs>
        <linearGradient id="metal">
          <stop offset="0" stopColor="#8a96a5" />
          <stop offset=".1" stopColor="#9caaba" />
          <stop offset=".25" stopColor="#a5b4c5" />
          <stop offset=".38" stopColor="#b1c0d4" />
          <stop offset=".5" stopColor="#9aa8b8" />
          <stop offset=".65" stopColor="#8592a0" />
          <stop offset=".8" stopColor="#6f7983" />
          <stop offset=".93" stopColor="#535960" />
          <stop offset="1" stopColor="#595f66" />
        </linearGradient>
        <linearGradient id="cut">
          <stop offset="0" stopColor="#a586b6" />
          <stop offset=".36" stopColor="#c29ccd" />
          <stop offset=".75" stopColor="#9c74a2" />
          <stop offset="1" stopColor="#7f5a85" />
        </linearGradient>
        <clipPath id="below"><rect x="1050" y="375" width="80" height="20" /></clipPath>
      </defs>

      <path d="M741.500 374H1230l-36 115A605 605 0 0 0 795 489z" fill="#f0c6ea" />
      <rect x="795" y="455" width="399.500" height="120" fill="url(#metal)" />
      <path d="M795 455h399.500v34A605 605 0 0 0 795 489z" fill="url(#cut)" />

      <path d="M309 455H1788" stroke="#3f9fb2" strokeWidth="1.500" strokeDasharray="5 5" />
      <path d="M795 455v120M1194.500 455v120" stroke="#237c88" strokeWidth="2" strokeDasharray="5 4" />
      <path d="M306 515.500H1788" stroke="#5c6ca6" strokeWidth="1" />
      <path d="M306 515.500H1788" stroke="#b55cc4" strokeWidth="1.200" strokeDasharray="8 2" />
      <path d="M767 504V264h585.500v240z" stroke="#2e5f9e" strokeWidth="1.500" strokeDasharray="5 5" />
      <path d="M995.500 200v715" stroke="#2d96a5" strokeWidth="1.500" strokeDasharray="5 5" />
      <path d="M741.500 374H1230l-36 115A605 605 0 0 0 795 489z" stroke="#f79f2e" strokeWidth="1.500" />

      <g stroke="#1a9fdc" strokeWidth="1.300">
        <path d="M741.500 330v39M1230 330v39M742 337.500h154M958 337.500h272" />
        <path d="M725 374h12M725 454.500h12M732 374v29M732 426v28" />
        <path d="M1032 375v12M1036 413q8 45 42 90 38 45 92 60M1194 489l-25 82" />
      </g>
      <g fill="#1a9fdc">
        <path d="M744 337.500l8-2.500h4v5h-4zM732 376l-2 10h4zM732 452l-2-10h4zM1032 389l-2-9h4zM1170 563l-12-1 2-4z" />
        <text x="926" y="344" fontSize="16" textAnchor="middle">12.24</text>
        <text x="731" y="421" fontSize="15" textAnchor="middle">2.02</text>
        <text x="1033" y="408" fontSize="15" textAnchor="middle">72.69</text>
      </g>
      <path d="M1228 337.500l-8-2.500h-4v5h4zM1047 456l-2-12h4z" fill="#159a2c" />
      <path d="M1053 377l-5 70" stroke="#3b1450" strokeWidth="1.600" />
      <g fill="#3b1450" fontSize="15">
        <text x="1059" y="385" clipPath="url(#below)">R 15.00</text>
        <text x="996" y="369">1</text>
        <text x="1025" y="630">1</text>
      </g>

      <path d="M995 515h24" stroke="#e0705c" />
      <path d="M995 515v25" stroke="#35d0f0" strokeWidth="1.500" />
      <circle cx="995" cy="514.500" r="3" fill="#1dbb36" />
      <circle cx="1019" cy="514.500" r="2.500" fill="#e0524a" />
      <circle cx="995" cy="540" r="2.500" fill="#35e0f8" />

      <circle cx="766" cy="503" r="44" fill="#ffef00" className="mix-blend-multiply" />

      <Badge x={978} y={347}><path d="M8 3v9M4 12h8" /></Badge>
      <Badge x={1006} y={607}><path d="M8 3v9M4 12h8" /></Badge>
      <Badge x={987} y={428}>
        <circle cx="7.500" cy="7.500" r="5" strokeWidth="1.200" />
        <path d="M4 15 16 4" />
        <circle cx="10.500" cy="10.500" r="2.500" stroke="#1d6ea5" />
      </Badge>
      <Badge x={978} y={487}><path d="M2 14l4-4M8 8l1-1M10 6l4-4" /></Badge>
      <Badge x={807} y={481}>
        <path d="M3 14 14 2" />
        <circle cx="6.500" cy="9.500" r="2.800" fill="#cbefc2" stroke="#1d6ea5" />
      </Badge>
      <Badge x={1205} y={481}>
        <path d="M3 14 14 2" />
        <circle cx="6.500" cy="9.500" r="2.800" fill="#cbefc2" stroke="#1d6ea5" />
      </Badge>

      <path d="M767 504v20l5-4 4 9 4-2-4-8h6z" fill="#fff" stroke="#222" strokeWidth="1.200" />
    </svg>
  );
}

function Canvas() {
  return (
    <main className="relative flex-1 bg-[#e5e9ec]">
      <Sketch />
      <div className="relative flex justify-center pt-[9px]">
        <div className="h-10 px-[2px] flex items-center bg-[#f7f8fa] border border-[#a9adae]">
          {viewTools.map((t) => (
            <button
              key={t.icon}
              type="button"
              aria-label={t.label}
              className={`relative w-[29px] h-[29px] mx-[2px] flex items-center justify-center border ${t.on ? 'bg-[#dddfe0] border-[#b3b5b6]' : 'border-transparent'}`}
            >
              <Glyph name={t.icon} />
              {t.more && (
                <svg viewBox="0 0 4 4" className="absolute right-0 bottom-0 size-1"><path d="M4 0v4H0z" fill="#333" /></svg>
              )}
            </button>
          ))}
        </div>
      </div>
    </main>
  );
}

function OuterRail() {
  return (
    <aside className="w-[76px] shrink-0 flex flex-col overflow-hidden bg-[#e8e8e8] text-[#444]">
      <div className="h-[37px] flex items-center justify-end gap-[25px] pr-[11px] bg-[#eff3f8] text-[#b3b7ba]">
        <button type="button" aria-label="还原">
          <svg viewBox="0 0 14 14" className="size-[14px]" fill="none" stroke="currentColor" strokeWidth="1.300"><rect x="1" y="4" width="9" height="9" rx="1.500" /><path d="M4 4V2q0-1 1-1h7q1 0 1 1v6q0 1-1 1h-2" /></svg>
        </button>
        <button type="button" aria-label="关闭">
          <svg viewBox="0 0 14 14" className="size-[14px]" stroke="currentColor" strokeWidth="1.200"><path d="M1 1l12 12M13 1 1 13" /></svg>
        </button>
      </div>
      <div className="h-[129px] flex items-start pt-[16px] pl-[13px] gap-[22px] bg-[#f2f4f2] border-t border-[#d0d5df]">
        <svg viewBox="0 0 4 16" className="w-1 h-4" fill="#666"><path d="M1 0h2v2H1zM1 6h2v2H1zM1 12h2v2H1z" /></svg>
        <svg viewBox="0 0 18 10" className="w-[18px] h-[10px] mt-[2px]" fill="none" stroke="#555" strokeWidth="1.500"><path d="M1 9l8-8 8 8" /></svg>
      </div>
      <div className="flex-1 min-h-0 flex">
        <div className="ml-[2px] w-[17px] shrink-0 flex flex-col items-center bg-[#dde0dd]">
          <svg viewBox="0 0 8 4" className="w-2 h-1 mt-[17px]"><path d="M0 4l4-4 4 4z" fill="#888" /></svg>
          <div className="mt-[372px] w-full h-28 rounded-full bg-[#f2f4f2] border border-[#b9bcb9]" />
        </div>
        <div className="relative flex-1 flex flex-col items-center">
          <div className="mt-[14px] w-[21px] h-[6px] shrink-0 border-y border-[#c2c4c4]" />
          <div className="mt-[14px] flex flex-col">
            {rail.map(([label, icon]) => (
              <button key={label} type="button" aria-label={label} className="h-[45px] mb-px last:mb-0 odd:mb-0 flex items-center">
                <svg viewBox="0 0 20 20" className="size-5" fill="none" stroke="currentColor" strokeWidth="1.200" strokeLinejoin="round">{icon}</svg>
              </button>
            ))}
          </div>
          <span className="absolute right-0 top-[596px] font-['Liberation_Sans',sans-serif] text-[26px] leading-7 text-[#a3a3a3]">92</span>
        </div>
      </div>
    </aside>
  );
}

function FullscreenHint() {
  return (
    <div className="absolute left-[828px] top-[45px] w-[264px] h-[50px] flex items-center justify-center gap-[7px] bg-[#24262e]/80 text-white">
      按
      <kbd className="h-[34px] w-[35px] flex items-center justify-center rounded-[2px] border border-white font-['Noto_Sans',sans-serif]">Esc</kbd>
      即可退出全屏模式
    </div>
  );
}

function Annotations() {
  return (
    <svg
      viewBox="0 0 1920 915"
      preserveAspectRatio="xMinYMin slice"
      className="absolute inset-0 w-full h-full pointer-events-none font-['Noto_Sans_CJK_SC',sans-serif]"
    >
      <g fill="#ff2415">
        <path d="M345 508l6-17 2 6L805 107l1.500 1.500L360 502l3 2z" />
        <path d="M600 410.500l15-9-2 4 77 .5 92 .5v1.500l-92 2-77 4 3 4z" />
        <text x="398" y="291" fontSize="21">以这条中心线镜像</text>
        <text x="482" y="419" fontSize="21">切除的部分</text>
      </g>
      <rect x="813.500" y="77.500" width="82" height="29" rx="2" fill="none" stroke="#ff2415" strokeWidth="3" />

      <circle cx="1557" cy="98" r="18" fill="#f8f9fc" />
      <g fill="#0f5591" opacity=".82">
        <path
          fillRule="evenodd"
          d="M1552 69h11v6l8 3 5-4 8 8-4 6 3 7h5v10h-5l-3 7 4 6-8 8-6-4-7 3v3h-12v-3l-8-3-5 4-8-8 4-6-3-7h-4v-10h4l3-8-4-5 8-8 5 4 9-3zM1557 82a16 16 0 1 0 .1 0z"
        />
        <text x="1602" y="106" fontSize="47" fontWeight="900">92工业网</text>
        <text x="1605" y="127" fontSize="21" className="font-['Liberation_Sans',sans-serif]">WWW.92GYW.COM</text>
      </g>
      <circle cx="1618" cy="79" r="6" fill="none" stroke="#fff" strokeWidth="4" />
      <circle cx="1618" cy="79" r="9" fill="none" stroke="#fff" strokeWidth="2" strokeDasharray="4 3" />
      <path d="M1569 72q-2 0-2 3v15q0 5 5 2l12-8q3-2 0-4l-10-7z" fill="#ecd14c" />
    </svg>
  );
}

export default function App() {
  return (
    <div className="relative h-screen flex overflow-hidden bg-black pl-[52px] pr-[51px] font-['Noto_Sans','Noto_Sans_CJK_SC',sans-serif] text-[15px] leading-5 text-[#3f4143]">
      <div className="flex-1 min-w-0 flex flex-col border-[5px] border-b-0 border-[#a2a3a3]">
        <TitleBar />
        <TabBar />
        <Ribbon />
        <div className="flex-1 min-h-0 flex">
          <ModelTree />
          <Canvas />
        </div>
      </div>
      <OuterRail />
      <FullscreenHint />
      <Annotations />
    </div>
  );
}
